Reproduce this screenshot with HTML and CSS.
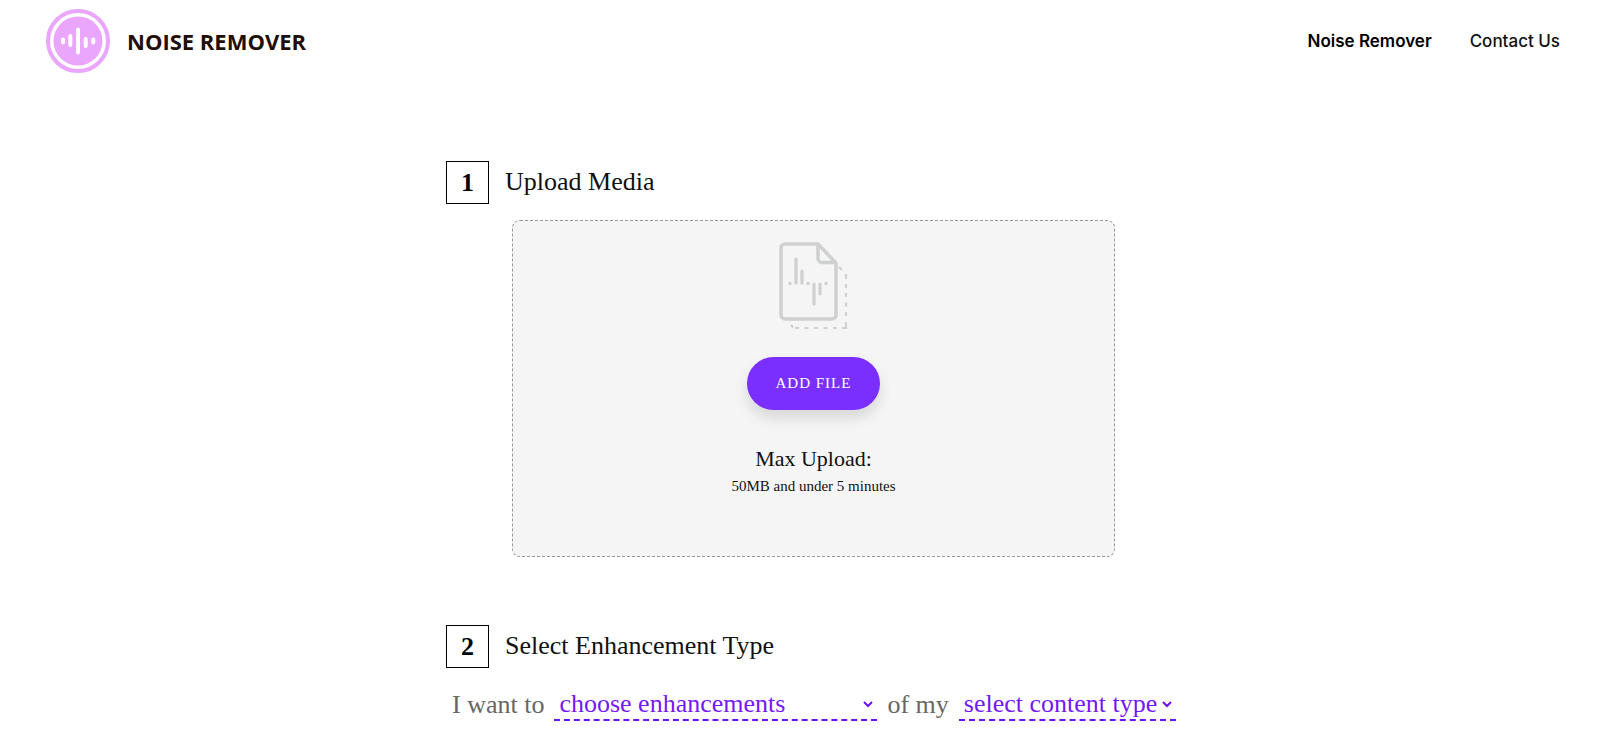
FILE: index.html
```
<!DOCTYPE html>
<html lang="en">
<head>
    <meta charset="UTF-8">
    <meta name="viewport" content="width=device-width, initial-scale=1">
    <title>Noise Remover</title>
    <link rel="stylesheet" href="styles.css">
</head>
<body>
    <header class="header">
        <a class="brand" href="#">
            <svg class="logo" viewBox="0 0 64 64" aria-hidden="true">
                <circle cx="32" cy="32" r="30" fill="#fff" stroke="#e9a6fc" stroke-width="4"/>
                <circle cx="32" cy="32" r="24.500" fill="#e9a6fc"/>
                <path d="M17 30.5v3M24.3 27v9M32 20.500v23M39.7 30v7M47.3 30.5v3" fill="none" stroke="#fff" stroke-width="4" stroke-linecap="round"/>
            </svg>
            <span class="brand-name">NOISE REMOVER</span>
        </a>
        <nav class="nav">
            <a class="active" href="#">Noise Remover</a>
            <a href="#contact">Contact Us</a>
        </nav>
    </header>

    <main class="main">
        <div class="container">
            <section class="step">
                <div class="step-head">
                    <span class="step-number">1</span>
                    <h2>Upload Media</h2>
                </div>
                <div class="dropzone">
                    <svg class="file-icon" viewBox="0 0 72 88" fill="none" stroke="#cfd0d0" aria-hidden="true">
                        <path d="M40 2H7a4 4 0 0 0-4 4v67a4 4 0 0 0 4 4h47a4 4 0 0 0 4-4V21L40 2v14.500a4 4 0 0 0 4 4h13" stroke-width="3.500" stroke-linejoin="round" stroke-linecap="round"/>
                        <path d="M18 17v24M24 29v12M36 42v20M42 42v10" stroke-width="3.200" stroke-linecap="round"/>
                        <path d="M12 41.500h.01M30 41.500h.01M48 41.500h.01" stroke-width="3.500" stroke-linecap="round"/>
                        <path d="M61 25l3 3M68 32v5M68 42v4M68 51v4M68 60.500v4M68 70v4M68 80v6h-4M59 86h-4M49.500 86h-4M40 86h-4M30.500 86h-4M21 86h-4M13 83l2 2.500" stroke-width="2.200"/>
                    </svg>
                    <button class="add-file" type="button">ADD FILE</button>
                    <p class="limit-title">Max Upload:</p>
                    <p class="limit-text">50MB and under 5 minutes</p>
                </div>
            </section>

            <section class="step">
                <div class="step-head">
                    <span class="step-number">2</span>
                    <h2>Select Enhancement Type</h2>
                </div>
                <form class="sentence">
                    <label for="enhancement">I want to</label>
                    <span class="select-wrap wide">
                        <select id="enhancement">
                            <option>choose enhancements</option>
                        </select>
                        <svg class="chevron" viewBox="0 0 10 7" aria-hidden="true"><path d="M1 1l4 4 4-4"/></svg>
                    </span>
                    <label for="content">of my</label>
                    <span class="select-wrap">
                        <select id="content">
                            <option>select content type</option>
                        </select>
                        <svg class="chevron" viewBox="0 0 10 7" aria-hidden="true"><path d="M1 1l4 4 4-4"/></svg>
                    </span>
                </form>
            </section>
        </div>
    </main>
</body>
</html>
```

FILE: styles.css
```
* {
    box-sizing: border-box;
}
body {
    margin: 0;
    background-color: #fff;
    color: #111;
    font-family: "Liberation Serif", "Times New Roman", serif;
}
a {
    color: inherit;
    text-decoration: none;
}
.header {
    display: flex;
    align-items: center;
    justify-content: space-between;
    padding: 9px 40px 9px 46px;
}
.brand {
    display: flex;
    align-items: center;
    gap: 17px;
}
.logo {
    width: 64px;
    height: 64px;
}
.brand-name {
    font-family: "Open Sans", "Noto Sans", sans-serif;
    font-size: 22px;
    font-weight: 700;
    color: #1f0f08;
}
.nav {
    display: flex;
    gap: 38px;
    font-family: Inter, sans-serif;
    font-size: 17px;
    font-weight: 500;
}
.nav .active {
    font-weight: 600;
    color: #000;
}
.main {
    padding: 79px 0 0 28px;
}
.container {
    max-width: 736px;
    margin: 0 auto;
}
.step + .step {
    margin-top: 68px;
}
.step-head {
    display: flex;
    align-items: center;
    gap: 16px;
    margin-bottom: 16px;
}
.step-number {
    display: flex;
    align-items: center;
    justify-content: center;
    width: 43px;
    height: 43px;
    border: 1px solid #000;
    font-size: 26px;
    font-weight: bold;
    color: #000;
}
h2 {
    margin: 0;
    padding-bottom: 2px;
    font-size: 26px;
    font-weight: normal;
}
.dropzone {
    display: flex;
    flex-direction: column;
    align-items: center;
    margin: 0 67px 0 66px;
    padding: 21px 20px 57px;
    border: 1px dashed #999;
    border-radius: 8px;
    background-color: #f5f5f5;
}
.file-icon {
    width: 72px;
    height: 88px;
}
.add-file {
    margin: 27px 0 35px;
    padding: 0 29px;
    height: 53px;
    border: none;
    border-radius: 27px;
    background-color: #7b2fff;
    color: #fff;
    font-family: inherit;
    font-size: 15px;
    letter-spacing: 1px;
    box-shadow: 0 8px 14px rgba(0, 0, 0, 0.12);
    cursor: pointer;
}
.limit-title {
    margin: 0;
    font-size: 22px;
    line-height: 28px;
}
.limit-text {
    margin: 0;
    font-size: 15px;
    line-height: 26px;
}
.sentence {
    display: flex;
    align-items: center;
    gap: 10px;
    padding: 5px 0 0 6px;
    font-size: 26px;
    color: #666;
    white-space: nowrap;
}
.select-wrap {
    position: relative;
    width: 217px;
    border-bottom: 2px dashed #6a11f5;
}
.select-wrap.wide {
    width: 323px;
}
select {
    display: block;
    width: 100%;
    padding: 0 16px 0 5px;
    border: none;
    background: none;
    appearance: none;
    color: #7518f5;
    font: inherit;
    line-height: 30px;
}
.chevron {
    position: absolute;
    top: 12px;
    right: 4px;
    width: 10px;
    height: 7px;
    fill: none;
    stroke: #6a11f5;
    stroke-width: 2;
    pointer-events: none;
}
```
